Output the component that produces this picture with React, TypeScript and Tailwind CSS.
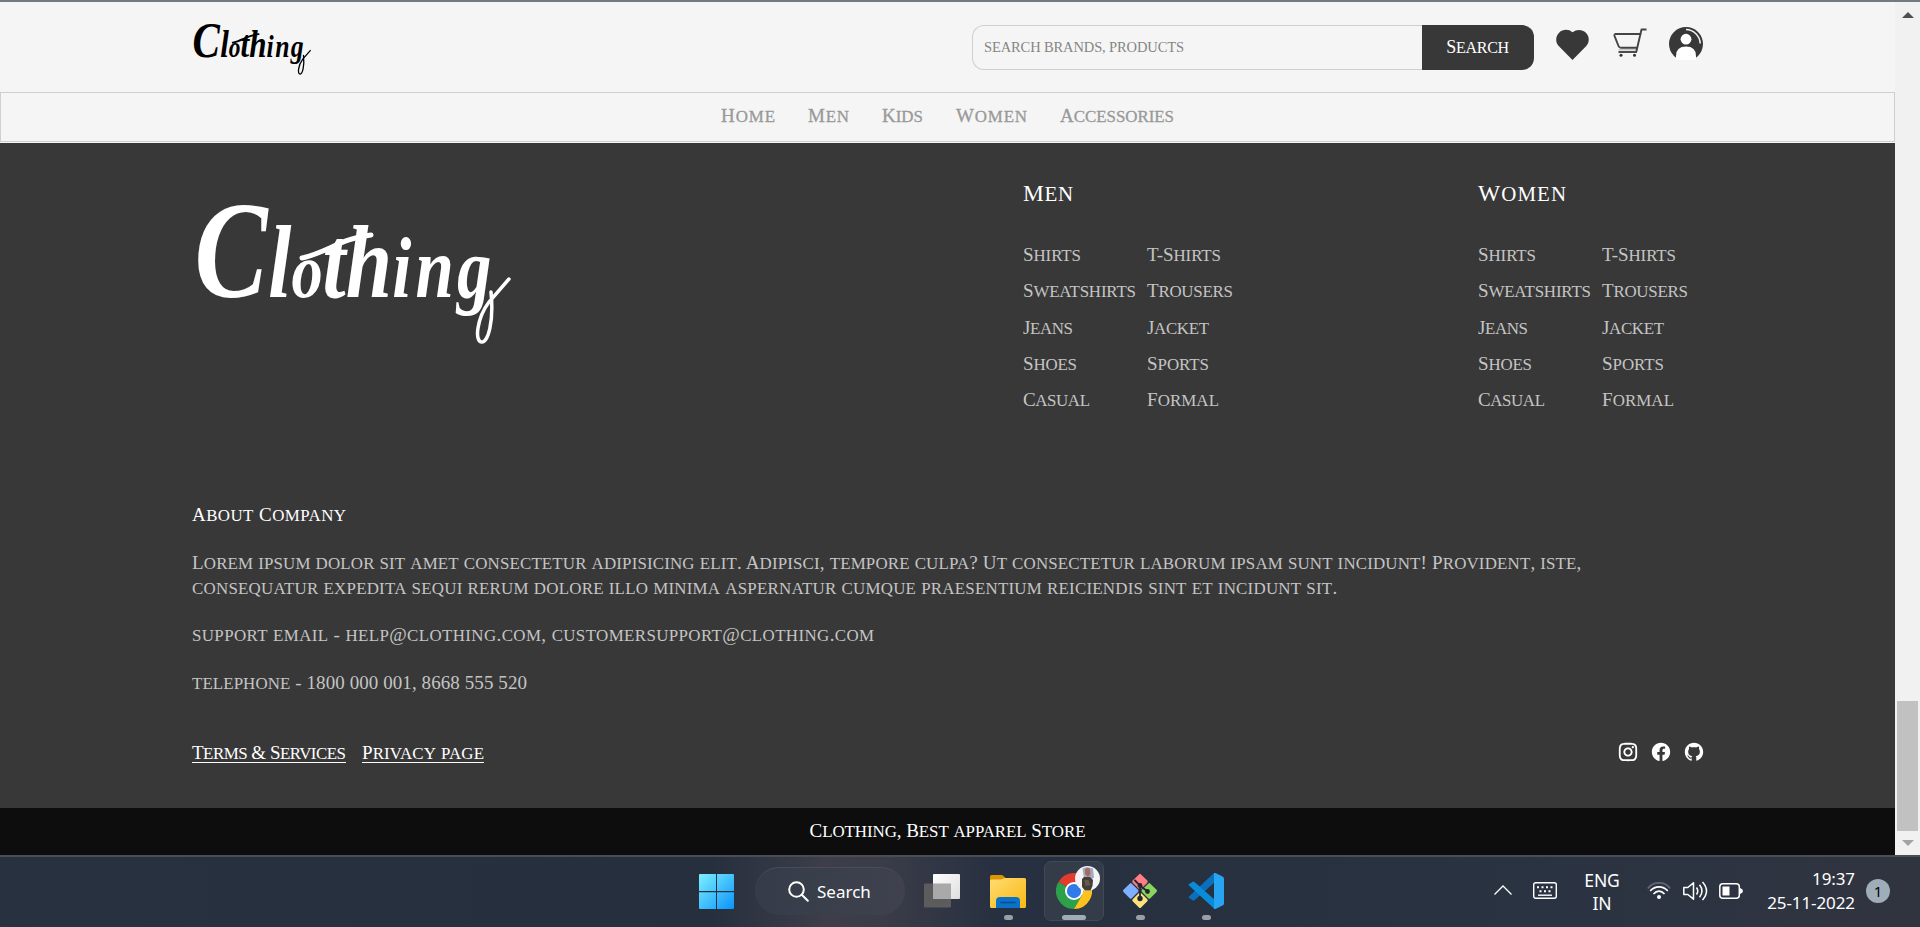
import { useLayoutEffect, useRef, useState } from "react";
import type { ReactNode } from "react";
import { RiFacebookCircleFill, RiGithubFill, RiHeartFill, RiInstagramLine } from "react-icons/ri";

/** Text set in large and small capitals, tracked so that it fills the width given by its class. */
function Caps({ text, className = "" }: { text: string; className?: string }) {
  const box = useRef<HTMLSpanElement>(null);
  const inner = useRef<HTMLSpanElement>(null);
  const [spacing, setSpacing] = useState(0);
  useLayoutEffect(() => {
    if (!box.current || !inner.current) return;
    const free = box.current.getBoundingClientRect().width - inner.current.getBoundingClientRect().width;
    setSpacing(free / Math.max(1, text.length - 1));
  }, [text]);
  const runs = text.match(/[a-z]+|[^a-z]+/g) ?? [];
  return (
    <span ref={box} className={`block whitespace-nowrap ${className}`}>
      <span ref={inner} style={{ letterSpacing: `${spacing}px` }}>
        {runs.map((run, i) =>
          /[a-z]/.test(run) ? (
            <span key={i} className="text-[0.89em] leading-none uppercase">
              {run}
            </span>
          ) : (
            run
          ),
        )}
      </span>
    </span>
  );
}

function Logo({ className }: { className: string }) {
  return (
    <svg viewBox="0 0 310 147" className={`overflow-visible ${className}`} fill="currentColor" stroke="currentColor">
      <text
        y="97"
        transform="scale(.8 1)"
        fontFamily="'Liberation Serif', serif"
        fontStyle="italic"
        fontWeight="700"
        strokeWidth="0"
        fontSize="86"
      >
        <tspan x="-8" fontSize="137">C</tspan>
        <tspan x="84" fontSize="104">l</tspan>
        <tspan x="113" fontSize="78">o</tspan>
        <tspan x="152" fontSize="104">t</tspan>
        <tspan x="181" fontSize="104">h</tspan>
        <tspan x="239">i</tspan>
        <tspan x="268">n</tspan>
        <tspan x="320">g</tspan>
      </text>
      <path d="M101 58c24-5 40-20 69-23" fill="none" strokeWidth="5" strokeLinecap="round" />
      <path d="M290 92C293 122 287 142 281 142 273 142 276 118 288 102L308 79" fill="none" strokeWidth="3.500" strokeLinecap="round" />
    </svg>
  );
}

function Cart() {
  return (
    <svg viewBox="0 0 34 29" className="h-[29px] w-[34px]" fill="none" stroke="#444" strokeWidth="1.900">
      <path d="M28.500 6H2.800Q1 6 1.500 7.800L5.500 18Q6.200 19.800 8 19.800H24M33.500 1.500H28.500L23.300 23.700" strokeLinejoin="round" />
      <path d="M5.500 24H24" />
      <path d="M5.500 21.800H23" strokeWidth=".6" stroke="#888" />
      <circle cx="8" cy="27.300" r="1.500" fill="#333" stroke="none" />
      <circle cx="21.500" cy="27.300" r="1.500" fill="#333" stroke="none" />
    </svg>
  );
}

function User() {
  return (
    <svg viewBox="0 0 34 33" className="h-[33px] w-[34px]">
      <circle cx="17" cy="17" r="17" fill="#383838" />
      <path d="M17 2.500A14.500 14.500 0 0 1 31.200 16.500" fill="none" stroke="#f5f5f5" strokeWidth="1.500" />
      <circle cx="17" cy="12.200" r="5.400" fill="#fff" />
      <path d="M7 33V29q0-9.500 10-9.500T27 29v4z" fill="#fff" />
    </svg>
  );
}

function Header() {
  return (
    <header className="flex h-[90px] items-start bg-[#f5f5f5] pl-[195px]">
      <Logo className="mt-[19px] h-[55px] w-[116px] text-black" />
      <div className="mt-[23px] ml-[661px] flex h-[45px]">
        <div className="flex w-[450px] items-center rounded-l-[12px] border border-r-0 border-[#cfcfcf] pl-[11px] text-[14.5px] text-[#858585]">
          <Caps text="SEARCH BRANDS, PRODUCTS" className="w-[200px]" />
        </div>
        <button className="flex w-[112px] items-center rounded-r-[12px] bg-[#383838] pl-[24px] text-[18px] text-white">
          <Caps text="Search" className="w-[63px]" />
        </button>
      </div>
      <div className="flex pl-[19px]">
        <RiHeartFill className="mt-[23px] size-[39px] text-[#383838]" />
        <div className="mt-[26px] ml-[21px]">
          <Cart />
        </div>
        <div className="mt-[25px] ml-[22px]">
          <User />
        </div>
      </div>
    </header>
  );
}

function Nav() {
  return (
    <nav className="flex h-[50px] items-start gap-[33px] border border-[#cfcfcf] bg-[#f5f5f5] pt-[11px] pl-[720px] text-[19px] leading-[24px] text-[#999] [-webkit-text-stroke:0.300px_#999]">
      <Caps text="Home" className="w-[54px]" />
      <Caps text="Men" className="w-[41px]" />
      <Caps text="Kids" className="w-[41px]" />
      <Caps text="Women" className="w-[71px]" />
      <Caps text="Accessories" className="w-[114px]" />
    </nav>
  );
}

function Column({ title }: { title: ReactNode }) {
  return (
    <section>
      <h2 className="mb-[24px] text-[23.5px] leading-[40px] text-white">{title}</h2>
      <div className="flex gap-[11px] text-[19px] leading-[36.250px] text-[#c4c4c4]">
        <div className="flex w-[113px] flex-col">
          <Caps text="Shirts" className="w-[58px]" />
          <Caps text="Sweatshirts" className="w-[113px]" />
          <Caps text="Jeans" className="w-[50px]" />
          <Caps text="Shoes" className="w-[54px]" />
          <Caps text="Casual" className="w-[67px]" />
        </div>
        <div className="flex w-[86px] flex-col">
          <Caps text="T-Shirts" className="w-[74px]" />
          <Caps text="Trousers" className="w-[86px]" />
          <Caps text="Jacket" className="w-[62px]" />
          <Caps text="Sports" className="w-[62px]" />
          <Caps text="Formal" className="w-[72px]" />
        </div>
      </div>
    </section>
  );
}

function Footer() {
  return (
    <footer>
      <div className="flex h-[665px] flex-col bg-[#383838] pr-[190px] pl-[192px] text-[19px] leading-[25px] text-[#c4c4c4]">
        <div className="flex h-[359px] items-start pt-[30px]">
          <Logo className="mt-[27px] ml-[9px] h-[147px] w-[310px] text-white" />
          <div className="ml-[512px] flex gap-[245px]">
            <Column title={<Caps text="Men" className="w-[50px]" />} />
            <Column title={<Caps text="Women" className="w-[88px]" />} />
          </div>
        </div>
        <h3 className="text-white">
          <Caps text="About Company" className="w-[154px]" />
        </h3>
        <p className="mt-[23px] flex flex-col">
          <Caps
            text="Lorem ipsum dolor sit amet consectetur adipisicing elit. Adipisci, tempore culpa? Ut consectetur laborum ipsam sunt incidunt! Provident, iste,"
            className="w-[1389px]"
          />
          <Caps
            text="consequatur expedita sequi rerum dolore illo minima aspernatur cumque praesentium reiciendis sint et incidunt sit."
            className="w-[1145px]"
          />
        </p>
        <p className="mt-[22px] flex">
          <Caps text="support email - help@clothing.com, customersupport@clothing.com" className="w-[682px]" />
        </p>
        <p className="mt-[23px] flex">
          <Caps text="telephone - 1800 000 001, 8668 555 520" className="w-[335px]" />
        </p>
        <div className="mt-[46px] flex items-center text-white">
          <a className="mr-[16px] h-[21px] border-b border-white leading-[21px]">
            <Caps text="Terms & Services" className="w-[154px]" />
          </a>
          <a className="h-[21px] border-b border-white leading-[21px]">
            <Caps text="Privacy page" className="w-[122px]" />
          </a>
          <div className="ml-auto flex gap-[11px]">
            <RiInstagramLine className="size-[22px]" />
            <RiFacebookCircleFill className="size-[22px]" />
            <RiGithubFill className="size-[22px]" />
          </div>
        </div>
      </div>
      <div className="flex h-[47px] justify-center bg-[#0d0d0d] pt-[11px] text-[19px] leading-[24px] text-white">
        <Caps text="Clothing, Best apparel Store" className="w-[276px]" />
      </div>
    </footer>
  );
}

function Scrollbar() {
  return (
    <div className="flex w-[25px] flex-col items-center bg-[#f1f1f1]">
      <svg viewBox="0 0 12 6" className="mt-[10px] h-[6px] w-[12px]" fill="#505050">
        <path d="M0 6 6 0l6 6z" />
      </svg>
      <div className="mt-[683px] h-[130px] w-[21px] bg-[#c1c1c1]" />
      <svg viewBox="0 0 12 6" className="mt-[9px] h-[6px] w-[12px]" fill="#a3a3a3">
        <path d="M0 0h12L6 6z" />
      </svg>
    </div>
  );
}

function TaskApp({ children, active = false }: { children: ReactNode; active?: boolean }) {
  return (
    <div
      className={
        active
          ? "flex h-[60px] w-[60px] flex-col items-center rounded-[7px] border border-[#424855] bg-[#343b49] pt-[11px]"
          : "flex h-[60px] w-[36px] flex-col items-center pt-[12px]"
      }
    >
      {children}
      <div
        className={
          active ? "mt-[6px] h-[5px] w-[24px] shrink-0 rounded-full bg-[#9fadb8]" : "mt-[6px] h-[5px] w-[9px] shrink-0 rounded-full bg-[#9a9ea5]"
        }
      />
    </div>
  );
}

function Taskbar() {
  return (
    <div className="flex h-[72px] items-start border-t-2 border-[#4a4d55] bg-[linear-gradient(90deg,#28313f_0%,#262f3e_37%,#3d3e49_43%,#3a3c48_46%,#273040_52%,#28313f_68%,#2a3342_80%,#30343f_100%)] font-['Noto_Sans','Open_Sans',sans-serif] text-white">
      <svg viewBox="0 0 35 35" className="mt-[17px] ml-[699px] h-[35px] w-[35px]">
        <defs>
          <linearGradient id="win" x1="0" y1="0" x2="35" y2="35" gradientUnits="userSpaceOnUse">
            <stop stopColor="#7df0ff" />
            <stop offset="1" stopColor="#0a93fb" />
          </linearGradient>
        </defs>
        <path fill="url(#win)" d="M1 0h16v16.900H0V1q0-1 1-1zM18 0h16q1 0 1 1v15.900H18zM0 18.200h17V35H1q-1 0-1-1zM18 18.200h17V34q0 1-1 1H18z" />
      </svg>
      <div className="mt-[10px] ml-[21px] flex h-[48px] w-[150px] items-center rounded-full border-t border-[#474c58] bg-[linear-gradient(90deg,#353c49,#3f424e)] pl-[33px] text-[17px]">
        <svg viewBox="0 0 21 21" className="h-[21px] w-[21px]" fill="none" stroke="#fff" strokeWidth="2">
          <circle cx="8.500" cy="8.500" r="7.300" />
          <path d="m13.800 13.800 6 6" strokeLinecap="round" />
        </svg>
        <span className="ml-[8px]">Search</span>
      </div>
      <svg viewBox="0 0 36 34" className="mt-[17px] ml-[19px] h-[34px] w-[36px]">
        <defs>
          <linearGradient id="tv" x1="0" y1="0" x2="1" y2="1">
            <stop stopColor="#fff" />
            <stop offset="1" stopColor="#dedede" />
          </linearGradient>
        </defs>
        <rect y="9.500" width="27" height="24" rx="1" fill="#5c5c5d" />
        <rect x="9" width="27" height="25" rx="1" fill="url(#tv)" />
        <path d="M9 9.500h18V25H9z" fill="#a9a9aa" />
      </svg>
      <div className="mt-[4px] ml-[30px] flex">
        <TaskApp>
          <svg viewBox="0 0 36 36" className="h-[36px] w-[36px]">
            <defs>
              <linearGradient id="fold" x1="0" y1="0" x2="1" y2="1">
                <stop stopColor="#ffdc72" />
                <stop offset="1" stopColor="#f9b912" />
              </linearGradient>
            </defs>
            <path d="M0 12V3.500Q0 2 1.500 2h10q1 0 2 1l2.500 2.500V12z" fill="#dc9500" />
            <path d="M0 8q0-1.500 1.500-1.500h9.500L15 5h19.500Q36 5 36 6.500v27q0 1.500-1.500 1.500h-33Q0 35 0 33.500z" fill="url(#fold)" />
            <path d="M6 35v-7q0-4 4-4h16q4 0 4 4v7z" fill="#0b72c8" />
            <path d="M11 29.500h14" stroke="#0a4c8f" strokeWidth="1.500" strokeLinecap="round" />
          </svg>
        </TaskApp>
        <div className="relative ml-[18px]">
          <TaskApp active>
            <svg viewBox="0 0 48 48" className="h-[36px] w-[36px]">
              <path d="M24 24 3.200 12A24 24 0 0 1 44.800 12H24z" fill="#e33b2e" />
              <path d="M24 24 3.200 12A24 24 0 0 0 24 48L34.400 30z" fill="#2da04b" />
              <path d="M34.400 30 24 48A24 24 0 0 0 44.800 12H24z" fill="#fcc31e" />
              <circle cx="24" cy="24" r="12" fill="#fff" />
              <circle cx="24" cy="24" r="9.500" fill="#2f7be9" />
            </svg>
          </TaskApp>
          <svg viewBox="0 0 25 25" className="absolute top-[5px] left-[31px] h-[25px] w-[25px]">
            <circle cx="12.500" cy="12.500" r="12.500" fill="#f4f4f6" />
            <path d="M7.500 2.500 12 1l6 1.500 1 9-3 2-7-1z" fill="#a3a8c4" />
            <path d="M10 3q3-2 5 0l.5 5-2.500 3-3-3z" fill="#a26e5e" />
            <path d="M7 13l2-2h6l3 3-.5 6-2 4.500H10L7 21z" fill="#473d38" />
            <path d="M9.500 14h4l2 5-5 1z" fill="#66594d" />
          </svg>
        </div>
        <div className="ml-[18px]">
          <TaskApp>
            <svg viewBox="0 0 36 36" className="h-[36px] w-[36px]">
              <g transform="rotate(45 18 18)">
                <rect x="5.500" y="5.500" width="11.800" height="11.800" rx="1.500" fill="#ff7e83" />
                <rect x="18.600" y="5.500" width="11.800" height="11.800" rx="1.500" fill="#8cd35e" />
                <rect x="5.500" y="18.600" width="11.800" height="11.800" rx="1.500" fill="#7fb0ff" />
                <rect x="18.600" y="18.600" width="11.800" height="11.800" rx="1.500" fill="#ffe27d" />
              </g>
              <path d="M12.500 7l5.500 5.500V26M18 12.500l7.500 6" stroke="#202733" strokeWidth="1.800" fill="none" />
              <circle cx="18" cy="12.500" r="2.400" fill="#202733" />
              <circle cx="25.500" cy="18.500" r="2.400" fill="#202733" />
              <circle cx="18" cy="25.500" r="2.700" fill="#202733" />
            </svg>
          </TaskApp>
        </div>
        <div className="ml-[30px]">
          <TaskApp>
            <svg viewBox="0 0 36 36" className="h-[36px] w-[36px]">
              <path d="M1 23.500 26 0l1 9L6.500 27.300q-1 .8-2 0L.8 24.800q-.8-.7.200-1.300z" fill="#0a6fbd" />
              <path d="M1 12.500 26.500 36 27 27 6.500 9q-1-.8-2 0L.8 11.200q-.8.700.2 1.300z" fill="#0a8bd8" />
              <path d="M26 0q.800-.3 1.500 0L34.500 3.500q1.500.8 1.500 2v25q0 1.300-1.500 2L27.500 36q-.8.300-1.500 0z" fill="#28a5f2" />
            </svg>
          </TaskApp>
        </div>
      </div>

      <svg viewBox="0 0 18 10" className="mt-[28px] ml-[270px] h-[10px] w-[18px]" fill="none" stroke="#fff" strokeWidth="1.300">
        <path d="m.5 9.500 8.500-8.500 8.500 8.500" />
      </svg>
      <svg viewBox="0 0 24 17" className="mt-[25px] ml-[21px] h-[17px] w-[24px]" fill="none" stroke="#fff" strokeWidth="1.400">
        <rect x=".7" y=".7" width="22.600" height="15.600" rx="2" />
        <path d="M4 5.200h16" strokeWidth="2" strokeDasharray="2 2.500" />
        <path d="M6.500 9.200h12" strokeWidth="2" strokeDasharray="2 2.500" />
        <path d="M5 13.200h14" />
      </svg>
      <div className="mt-[12px] ml-[22px] flex w-[46px] flex-col items-center text-[17.5px] leading-[23px] tracking-[-0.1px]">
        <span>ENG</span>
        <span>IN</span>
      </div>
      <svg viewBox="0 0 24 18" className="mt-[25px] ml-[22px] h-[18px] w-[24px]" fill="none" stroke="#fff" strokeWidth="1.700">
        <path d="M.8 6.500Q5 .8 12 .8t11.200 5.700" stroke="#626873" />
        <path d="M3.200 8.800Q7 4.800 12 4.800t8.800 4M6.500 12Q9 9.200 12 9.200t5.500 2.800" />
        <circle cx="12" cy="15" r="2" fill="#fff" stroke="none" />
      </svg>
      <svg viewBox="0 0 25 20" className="mt-[24px] ml-[12px] h-[20px] w-[25px]" fill="none" stroke="#fff" strokeWidth="1.500">
        <path d="M.8 6.500v7h4l5.700 4.700V1.800L4.800 6.500z" strokeLinejoin="round" />
        <path d="M13.500 6.500q2.500 3.500 0 7M16.500 3.800q5 6.200 0 12.400M19.500 1q8 9 0 18" />
      </svg>
      <svg viewBox="0 0 24 16" className="mt-[26px] ml-[11px] h-[16px] w-[24px]">
        <rect x=".8" y=".8" width="19.500" height="14.400" rx="3" fill="none" stroke="#fff" strokeWidth="1.500" />
        <path d="M3.500 3.500h7v9h-7zM21 5q3 1 3 3t-3 3z" fill="#fff" />
      </svg>
      <div className="mt-[10px] ml-[22px] flex w-[90px] flex-col items-end text-[17px] leading-[24px] tracking-[-0.1px] whitespace-nowrap">
        <span>19:37</span>
        <span>25-11-2022</span>
      </div>
      <div className="mt-[22px] ml-[11px] flex h-[24px] w-[24px] items-center justify-center rounded-full bg-[#9fadb8] text-[15px] text-black">1</div>
    </div>
  );
}

export default function App() {
  return (
    <div className="flex h-[927px] w-[1920px] flex-col overflow-hidden bg-[#f5f5f5] font-['Liberation_Serif',serif]">
      <div className="h-[2px] shrink-0 bg-[#6f7d83]" />
      <div className="flex h-[853px] shrink-0">
        <main className="w-[1895px]">
          <Header />
          <Nav />
          <div className="h-px bg-[#f5f5f5]" />
          <Footer />
        </main>
        <Scrollbar />
      </div>
      <Taskbar />
    </div>
  );
}
